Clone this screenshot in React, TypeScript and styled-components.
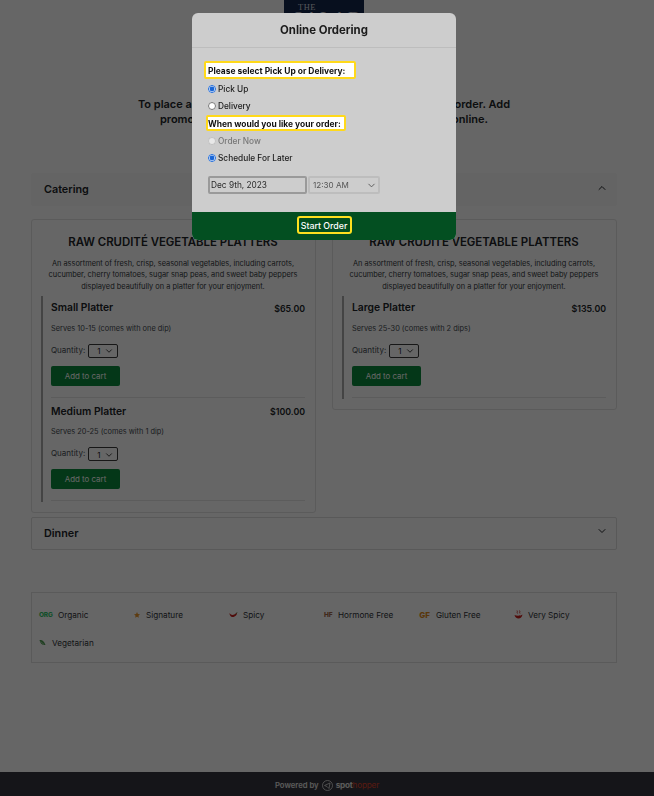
import React, { FC } from "react";
import styled, { createGlobalStyle } from "styled-components";
import { ChevronDown, ChevronUp } from "lucide-react";

const GlobalStyle = createGlobalStyle`
  html, body {
    margin: 0;
    padding: 0;
    background: #fff;
  }
  * {
    box-sizing: border-box;
  }
  body {
    font-family: Inter, "Liberation Sans", sans-serif;
    color: #212529;
  }
`;

const Page = styled.div`
  min-height: 796px;
  display: flex;
  flex-direction: column;
`;

const Main = styled.main`
  flex: 1;
  padding: 0 37px 0 31px;
`;

const Logo = styled.div`
  width: 80px;
  height: 80px;
  margin: 0 auto;
  padding: 3px 0 0 14px;
  background: #13264d;
  color: #d5d8de;
  font-family: "Liberation Serif", serif;
  font-size: 8.5px;
  line-height: 8px;
  letter-spacing: 0.5px;

  b {
    display: block;
    font-size: 18px;
    line-height: 16px;
    font-weight: 400;
    margin-left: -5px;
    letter-spacing: 2px;
  }
`;

const Intro = styled.p`
  margin: 17px auto 46px;
  width: 400px;
  text-align: center;
  font-size: 11px;
  line-height: 15px;
  font-weight: 600;
`;

const AccordionHead = styled.div<{ $border?: boolean }>`
  height: 33px;
  display: flex;
  align-items: center;
  justify-content: space-between;
  padding: 0 8px 4px 12px;
  border-radius: 2px;
  background: ${(p) => (p.$border ? "#fff" : "#fbfbfb")};
  border: 1px solid ${(p) => (p.$border ? "#dedede" : "transparent")};

  h2 {
    margin: 0;
    font-size: 10.8px;
    font-weight: 600;
    position: relative;
    top: 2px;
  }
`;

const Cards = styled.div`
  display: grid;
  grid-template-columns: 285px 285px;
  gap: 16px;
  align-items: start;
  margin-top: 13px;
  margin-bottom: 4px;
`;

const Card = styled.section`
  border: 1px solid #e4e4e4;
  border-radius: 3px;
  padding: 14px 10px 10px 9px;
`;

const CardTitle = styled.h3`
  margin: 0;
  text-align: center;
  font-size: 11.4px;
  line-height: 16px;
  font-weight: 600;
  white-space: nowrap;
`;

const CardText = styled.p`
  margin: 8px 0 0;
  text-align: center;
  font-size: 7.4px;
  line-height: 11.3px;
  color: #33383d;
  white-space: nowrap;
`;

const ItemList = styled.div`
  margin-top: 4px;
  border-left: 2px solid #aaa;
  padding-left: 8px;
  padding-bottom: 1px;
`;

const Item = styled.div`
  height: 103px;
  padding-top: 6.5px;
  border-bottom: 1px solid #e6e6e6;

  &:first-child {
    height: 102px;
    padding-top: 5px;
  }
`;

const ItemHead = styled.div`
  display: flex;
  align-items: center;
  justify-content: space-between;
  height: 13px;

  h4 {
    margin: 0;
    font-size: 10.3px;
    font-weight: 600;
  }
  strong {
    font-size: 8.8px;
    font-weight: 600;
    position: relative;
    top: 1px;
  }
`;

const Serves = styled.div`
  margin-top: 9px;
  font-size: 7.4px;
  line-height: 12px;
  color: #444a50;
`;

const QuantityRow = styled.div`
  margin-top: 9px;
  display: flex;
  align-items: center;
  gap: 3px;
  height: 14px;
  font-size: 8px;
  color: #444a50;

  span {
    position: relative;
    top: -1px;
  }
`;

const QuantitySelect = styled.div`
  width: 30px;
  height: 14px;
  border: 1px solid #3a3a3a;
  border-radius: 2px;
  display: flex;
  align-items: center;
  justify-content: space-between;
  padding: 1px 3px 0 8px;
  font-size: 8px;
  color: #222;
`;

const CartButton = styled.button`
  display: block;
  margin-top: 8px;
  width: 69px;
  height: 20px;
  border: none;
  border-radius: 2px;
  background: #0a8a3c;
  color: #fff;
  font: 400 7.9px Inter, sans-serif;
  padding: 0;
`;

const Legend = styled.div`
  margin-top: 42px;
  height: 71px;
  border: 1px solid #e2e2e2;
  padding: 8px 7px;
  display: grid;
  grid-template-columns: repeat(6, 95px);
  grid-auto-rows: 28px;
  align-items: center;
`;

const LegendItem = styled.div<{ $gap: number }>`
  display: flex;
  align-items: center;
  gap: ${(p) => p.$gap}px;
  font-size: 8.2px;
  color: #2f3338;
`;

const TextMark = styled.span<{ $color: string; $size: number; $width: number }>`
  display: block;
  width: ${(p) => p.$width}px;
  text-align: center;
  color: ${(p) => p.$color};
  font-size: ${(p) => p.$size}px;
  font-weight: 800;
  line-height: 8px;
  letter-spacing: -0.2px;
`;

const Footer = styled.footer`
  height: 24px;
  background: #36363f;
  display: flex;
  align-items: center;
  justify-content: center;
  gap: 3px;
  padding-top: 2px;
  font-size: 7.7px;
  font-weight: 600;
  color: #e2e2e2;
`;

const BrandName = styled.span`
  font-weight: 700;
  font-size: 8.2px;
  letter-spacing: -0.2px;

  em {
    font-style: normal;
    color: #d9412b;
    font-weight: 400;
  }
`;

const Overlay = styled.div`
  position: fixed;
  inset: 0;
  background: rgba(0, 0, 0, 0.6);
`;

const Modal = styled.div`
  position: absolute;
  top: 13px;
  left: 192px;
  width: 264px;
  height: 227px;
  background: #cdcdcd;
  border-radius: 6px;
  overflow: hidden;
  display: flex;
  flex-direction: column;
  color: #1b1b1b;
`;

const ModalHead = styled.h1`
  margin: 0;
  height: 35px;
  flex-shrink: 0;
  border-bottom: 1px solid #bdbdbd;
  display: flex;
  align-items: center;
  justify-content: center;
  font-size: 11.4px;
  font-weight: 700;
`;

const ModalBody = styled.div`
  flex: 1;
  padding: 13px 0 0 12px;
  font-size: 8.3px;
`;

const Prompt = styled.div<{ $width: number; $height: number; $indent: number; $top: number }>`
  width: ${(p) => p.$width}px;
  height: ${(p) => p.$height}px;
  margin: ${(p) => p.$top}px 0 0 ${(p) => p.$indent}px;
  padding: 1px 0 0 ${(p) => 2 - p.$indent}px;
  display: flex;
  align-items: center;
  background: #fff;
  border: 2px solid #ffd91a;
  border-radius: 2px;
  font-size: 8.45px;
  font-weight: 700;
  color: #111;
  white-space: nowrap;
`;

const RadioGroup = styled.div`
  margin-top: 1px;
`;

const RadioRow = styled.label<{ $disabled?: boolean }>`
  display: flex;
  align-items: center;
  gap: 2px;
  height: 17px;
  margin-left: 4px;
  font-weight: 500;
  color: ${(p) => (p.$disabled ? "#777" : "#1b1b1b")};

  input {
    width: 8px;
    height: 8px;
    margin: 0;
    accent-color: #1a66d6;
  }
`;

const WhenRow = styled.div`
  margin: 10px 0 0 4px;
  display: flex;
  gap: 1px;
  height: 18px;
`;

const DateField = styled.div`
  width: 99px;
  border: 2px solid #9a9a9a;
  border-radius: 2px;
  display: flex;
  align-items: center;
  padding-left: 1px;
  color: #2b2b2b;
`;

const TimeField = styled.div`
  width: 72px;
  border: 2px solid #bdbdbd;
  border-radius: 2px;
  display: flex;
  align-items: center;
  justify-content: space-between;
  padding: 0 1px 0 3px;
  font-size: 8.1px;
  color: #555;
`;

const ModalFoot = styled.div`
  height: 28px;
  flex-shrink: 0;
  background: #034f21;
  display: flex;
  align-items: center;
  justify-content: center;
  padding-bottom: 2px;
`;

const StartButton = styled.button`
  width: 55px;
  height: 18px;
  padding: 0;
  background: transparent;
  border: 2px solid #ffe01f;
  border-radius: 3px;
  color: #fff;
  font: 500 8.8px Inter, sans-serif;
`;

const StarIcon = () => (
  <svg width="6" height="6" viewBox="0 0 10 10">
    <path d="M5 0l1.5 3.3 3.5.4-2.6 2.4.7 3.6L5 7.9 1.9 9.7l.7-3.6L0 3.7l3.5-.4z" fill="#e9962c" />
  </svg>
);

const PepperIcon = () => (
  <svg width="9" height="6" viewBox="0 0 18 12">
    <path d="M1 2c3 5 8 5 13 1l2-2c1 4-4 10-10 9C3 9 1 6 1 2z" fill="#c8201c" />
    <path d="M14 3l2-2" stroke="#3c8a3c" strokeWidth="2" />
  </svg>
);

const HotIcon = () => (
  <svg width="9" height="9" viewBox="0 0 18 18">
    <path d="M6 1c2 2-1 3 1 6M11 1c2 2-1 3 1 6" stroke="#c8201c" strokeWidth="1.6" fill="none" />
    <path d="M1 10c4 2 12 2 16-1-1 5-4 8-8 8s-7-3-8-7z" fill="#c8201c" />
  </svg>
);

const LeafIcon = () => (
  <svg width="7" height="7" viewBox="0 0 14 14">
    <path d="M1 2c5-1 9 1 12 10-6 1-11-3-12-10z" fill="#4f9c52" />
    <path d="M3 5l7 6" stroke="#d8ecd8" strokeWidth="1" />
  </svg>
);

const SpotMark = () => (
  <svg width="11" height="11" viewBox="0 0 22 22" fill="none" stroke="#e2e2e2" strokeWidth="1.6">
    <circle cx="11" cy="11" r="10" />
    <path d="M5 11l11-5-2 11-4-4z" />
  </svg>
);

interface IPlatter {
  name: string;
  price: string;
  serves: string;
}

const Platter: FC<IPlatter> = ({ name, price, serves }) => {
  return (
    <Item>
      <ItemHead>
        <h4>{name}</h4>
        <strong>{price}</strong>
      </ItemHead>
      <Serves>{serves}</Serves>
      <QuantityRow>
        <span>Quantity:</span>
        <QuantitySelect>
          1
          <ChevronDown size={10} strokeWidth={2} />
        </QuantitySelect>
      </QuantityRow>
      <CartButton>Add to cart</CartButton>
    </Item>
  );
};

const PlatterCard: FC<{ platters: IPlatter[] }> = ({ platters }) => {
  return (
    <Card>
      <CardTitle>RAW CRUDITÉ VEGETABLE PLATTERS</CardTitle>
      <CardText>
        An assortment of fresh, crisp, seasonal vegetables, including carrots,
        <br />
        cucumber, cherry tomatoes, sugar snap peas, and sweet baby peppers
        <br />
        displayed beautifully on a platter for your enjoyment.
      </CardText>
      <ItemList>
        {platters.map((platter) => (
          <Platter key={platter.name} {...platter} />
        ))}
      </ItemList>
    </Card>
  );
};

const App: FC = () => {
  return (
    <>
      <GlobalStyle />
      <Page>
        <Main>
          <Logo>
            THE
            <b>SALAD</b>
          </Logo>
          <Intro>
            To place an order, choose your platters below to begin your order. Add
            <br />
            promo codes at checkout, and pay for all your catering online.
          </Intro>
          <AccordionHead>
            <h2>Catering</h2>
            <ChevronUp size={12} strokeWidth={2} />
          </AccordionHead>
          <Cards>
            <PlatterCard
              platters={[
                { name: "Small Platter", price: "$65.00", serves: "Serves 10-15 (comes with one dip)" },
                { name: "Medium Platter", price: "$100.00", serves: "Serves 20-25 (comes with 1 dip)" },
              ]}
            />
            <PlatterCard
              platters={[{ name: "Large Platter", price: "$135.00", serves: "Serves 25-30 (comes with 2 dips)" }]}
            />
          </Cards>
          <AccordionHead $border>
            <h2>Dinner</h2>
            <ChevronDown size={12} strokeWidth={2} />
          </AccordionHead>
          <Legend>
            <LegendItem $gap={6}>
              <TextMark $color="#2fc66a" $size={6.5} $width={13}>ORG</TextMark>
              Organic
            </LegendItem>
            <LegendItem $gap={6}>
              <StarIcon />
              Signature
            </LegendItem>
            <LegendItem $gap={5}>
              <PepperIcon />
              Spicy
            </LegendItem>
            <LegendItem $gap={6}>
              <TextMark $color="#a0694a" $size={6.5} $width={8}>HF</TextMark>
              Hormone Free
            </LegendItem>
            <LegendItem $gap={6}>
              <TextMark $color="#e08a1c" $size={8} $width={11}>GF</TextMark>
              Gluten Free
            </LegendItem>
            <LegendItem $gap={5}>
              <HotIcon />
              Very Spicy
            </LegendItem>
            <LegendItem $gap={6}>
              <LeafIcon />
              Vegetarian
            </LegendItem>
          </Legend>
        </Main>
        <Footer>
          Powered by
          <SpotMark />
          <BrandName>
            spot<em>hopper</em>
          </BrandName>
        </Footer>
      </Page>
      <Overlay>
        <Modal>
          <ModalHead>Online Ordering</ModalHead>
          <ModalBody>
            <Prompt $width={152} $height={18} $indent={0} $top={0}>
              Please select Pick Up or Delivery:
            </Prompt>
            <RadioGroup>
              <RadioRow>
                <input type="radio" name="method" defaultChecked />
                Pick Up
              </RadioRow>
              <RadioRow>
                <input type="radio" name="method" />
                Delivery
              </RadioRow>
            </RadioGroup>
            <Prompt $width={140} $height={16} $indent={2} $top={1}>
              When would you like your order:
            </Prompt>
            <RadioGroup>
              <RadioRow $disabled>
                <input type="radio" name="when" disabled />
                Order Now
              </RadioRow>
              <RadioRow>
                <input type="radio" name="when" defaultChecked />
                Schedule For Later
              </RadioRow>
            </RadioGroup>
            <WhenRow>
              <DateField>Dec 9th, 2023</DateField>
              <TimeField>
                12:30 AM
                <ChevronDown size={11} strokeWidth={2} />
              </TimeField>
            </WhenRow>
          </ModalBody>
          <ModalFoot>
            <StartButton>Start Order</StartButton>
          </ModalFoot>
        </Modal>
      </Overlay>
    </>
  );
};

export default App;
